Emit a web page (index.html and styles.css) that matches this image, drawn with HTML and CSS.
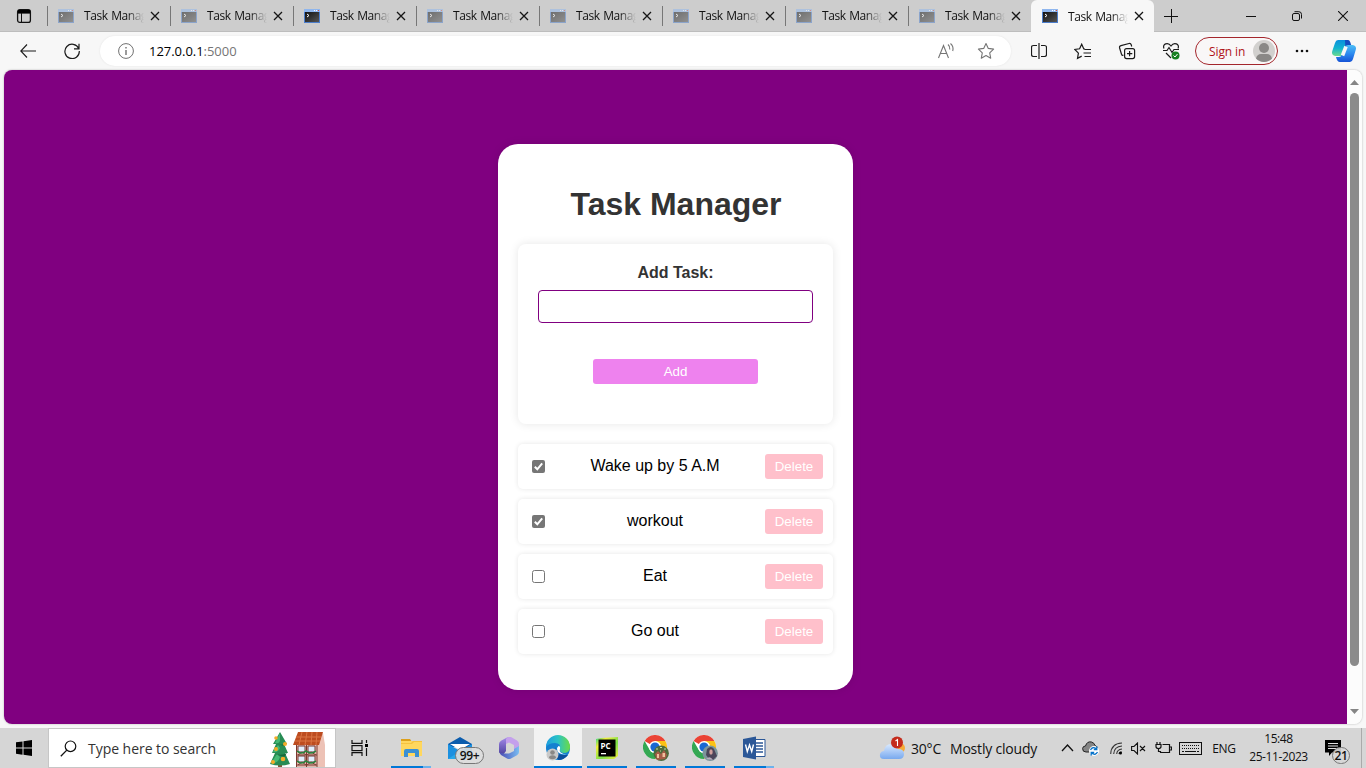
FILE: index.html
```html
<!DOCTYPE html>
<html lang="en">
<head>
<meta charset="utf-8">
<title>Task Manager</title>
<link rel="stylesheet" href="styles.css">
</head>
<body>
<svg class="defs" width="0" height="0" aria-hidden="true">
  <defs>
    <linearGradient id="termBlack" x1="0" y1="0" x2="1" y2="1"><stop offset="0" stop-color="#111"/><stop offset="1" stop-color="#555"/></linearGradient>
    <linearGradient id="cpLeft" x1="0" y1="0" x2="0" y2="1"><stop offset="0" stop-color="#0b8fdd"/><stop offset=".5" stop-color="#12b3cf"/><stop offset="1" stop-color="#6fdc8c"/></linearGradient>
    <linearGradient id="cpRight" x1="0" y1="0" x2="0" y2="1"><stop offset="0" stop-color="#4fc0f5"/><stop offset=".5" stop-color="#2d8cf0"/><stop offset="1" stop-color="#1553d6"/></linearGradient>
    <linearGradient id="cloudFill" x1="0" y1="0" x2="0" y2="1"><stop offset="0" stop-color="#d9e9ff"/><stop offset="1" stop-color="#78a9ee"/></linearGradient>
    <linearGradient id="edgeGreen" x1="0" y1="0" x2="1" y2="0"><stop offset="0" stop-color="#1d9ce0"/><stop offset=".5" stop-color="#2cc3c4"/><stop offset="1" stop-color="#6bdb45"/></linearGradient>
    <linearGradient id="pcEdge" x1="0" y1="0" x2="1" y2="1"><stop offset="0" stop-color="#21d789"/><stop offset=".25" stop-color="#f3f03c"/><stop offset=".6" stop-color="#7be04a"/><stop offset="1" stop-color="#f7ee3a"/></linearGradient>
    <linearGradient id="m365a" x1="0" y1="0" x2="0" y2="1"><stop offset="0" stop-color="#a58bea"/><stop offset="1" stop-color="#4a3f9c"/></linearGradient>
    <linearGradient id="m365b" x1="0" y1="0" x2="1" y2="0"><stop offset="0" stop-color="#4a4bb4"/><stop offset="1" stop-color="#79bdf2"/></linearGradient>
    <symbol id="terminal" viewBox="0 0 16 14">
      <path fill="#4b7dcb" d="M0 0h16v14H0z"/><path fill="#8fb6ee" d="M0 0h16v3H0z"/>
      <path fill="#fff" d="M10 1h1v1h-1zM12 1h1v1h-1z"/><path fill="#e24a35" d="M14 1h1v1h-1z"/>
      <path fill="url(#termBlack)" d="M1 3h14v10H1z"/><path d="M3 5l2 1.5L3 8" fill="none" stroke="#fff"/>
    </symbol>
    <symbol id="close" viewBox="0 0 10 10"><path d="M1 1l8 8M9 1L1 9" fill="none" stroke="#151515" stroke-width="1.3"/></symbol>
    <symbol id="chrome" viewBox="0 0 26 26">
      <circle cx="12" cy="12" r="12" fill="#fff"/>
      <path fill="#ea4335" d="M12 12L1.6 6A12 12 0 0 1 22.4 6H12z"/>
      <path fill="#34a853" d="M12 24A12 12 0 0 1 1.6 6l5.2 9A6 6 0 0 0 12 18l5.2-3z"/>
      <path fill="#fbc116" d="M12 24l5.2-9A6 6 0 0 0 17.2 9L12 6h10.4A12 12 0 0 1 12 24z"/>
      <circle cx="12" cy="12" r="6" fill="#fff"/><circle cx="12" cy="12" r="4.6" fill="#1967d2"/>
    </symbol>
  </defs>
</svg>

<div class="tabstrip">
  <div class="tab-actions"><svg width="16" height="16" viewBox="0 0 16 16"><rect x="1.6" y="1.6" width="12.8" height="12.8" rx="2.2" fill="none" stroke="#111" stroke-width="1.3"/><path d="M2 2h12v3.6H2z"/><path d="M5.5 5v9" stroke="#111"/></svg></div>
  <div class="tab faded"><svg class="fav"><use href="#terminal"/></svg><span>Task Manager</span><svg class="x"><use href="#close"/></svg></div>
  <div class="tab faded"><svg class="fav"><use href="#terminal"/></svg><span>Task Manager</span><svg class="x"><use href="#close"/></svg></div>
  <div class="tab"><svg class="fav"><use href="#terminal"/></svg><span>Task Manager</span><svg class="x"><use href="#close"/></svg></div>
  <div class="tab faded"><svg class="fav"><use href="#terminal"/></svg><span>Task Manager</span><svg class="x"><use href="#close"/></svg></div>
  <div class="tab faded"><svg class="fav"><use href="#terminal"/></svg><span>Task Manager</span><svg class="x"><use href="#close"/></svg></div>
  <div class="tab faded"><svg class="fav"><use href="#terminal"/></svg><span>Task Manager</span><svg class="x"><use href="#close"/></svg></div>
  <div class="tab faded"><svg class="fav"><use href="#terminal"/></svg><span>Task Manager</span><svg class="x"><use href="#close"/></svg></div>
  <div class="tab faded"><svg class="fav"><use href="#terminal"/></svg><span>Task Manager</span><svg class="x"><use href="#close"/></svg></div>
  <div class="tab active"><svg class="fav"><use href="#terminal"/></svg><span>Task Manager</span><svg class="x"><use href="#close"/></svg></div>
  <div class="new-tab"><svg width="14" height="14" viewBox="0 0 14 14"><path d="M7.5 0v14M0 7.5h14" stroke="#111"/></svg></div>
  <div class="window-controls">
    <div><svg width="10" height="10"><path d="M0 5.5h10" stroke="#111"/></svg></div>
    <div><svg width="10" height="10" viewBox="0 0 10 10"><g fill="none" stroke="#111"><rect x=".5" y="2.5" width="7" height="7" rx="1.5"/><path d="M2.5.7h4.3A2.7 2.7 0 0 1 9.5 3.4v4.1"/></g></svg></div>
    <div><svg width="10" height="10" viewBox="0 0 10 10"><path d="M0 0l10 10M10 0L0 10" stroke="#111" stroke-width="1.1"/></svg></div>
  </div>
</div>

<div class="toolbar">
  <div class="tool"><svg width="16" height="14" viewBox="0 0 16 14"><path d="M7 .5L.8 7 7 13.5M1 7h15" fill="none" stroke="#1b1b1b" stroke-width="1.1"/></svg></div>
  <div class="tool"><svg width="16" height="16" viewBox="0 0 16 16"><path d="M14.7 5.5A7.2 7.2 0 1 0 15.3 8M15 .8v5h-5" fill="none" stroke="#1b1b1b" stroke-width="1.2"/></svg></div>
  <div class="address">
    <svg width="16" height="16" viewBox="0 0 16 16"><circle cx="8" cy="8" r="7.4" fill="none" stroke="#707070"/><path d="M8 7v5M8 4v1.5" stroke="#707070" stroke-width="1.4"/></svg>
    <span class="url">127.0.0.1<i>:5000</i></span>
    <svg class="aloud" width="18" height="16" viewBox="0 0 18 16"><path d="M1.500 15L6.500 2.500l5 12.500M3.200 10.500h6.600M11 1.500q2.300 2 1.800 5M13.500.5q3.500 3 2.200 7.500" fill="none" stroke="#757575" stroke-width="1.100"/></svg>
    <svg width="18" height="18" viewBox="0 0 18 18"><path d="M9 1.500l2.300 4.900 5.300.7-3.900 3.700 1 5.400L9 13.600l-4.700 2.600 1-5.400L1.400 7.100l5.300-.7z" fill="none" stroke="#757575" stroke-width="1.100" stroke-linejoin="round"/></svg>
  </div>
  <div class="tool after"><svg width="16" height="16" viewBox="0 0 16 16"><path d="M6 2.500H2.500Q.5 2.500.5 4.500v7q0 2 2 2H6M10 2.500h3.500q2 0 2 2v7q0 2-2 2H10M8 0v16" fill="none" stroke="#1b1b1b" stroke-width="1.200"/></svg></div>
  <div class="tool"><svg width="18" height="17" viewBox="0 0 18 17"><path d="M11 6h-1.200L7.700 1.200 5.600 5.800.8 6.500l3.600 3.600-.9 5.200 4.200-2.200M10.500 6.500H17M9.500 10H17M10.500 13.500H17" fill="none" stroke="#1b1b1b" stroke-width="1.200"/></svg></div>
  <div class="tool"><svg width="18" height="18" viewBox="0 0 18 18"><g fill="none" stroke="#1b1b1b" stroke-width="1.200"><rect x="6.600" y="6.600" width="10" height="10" rx="2"/><path d="M11.600 9v5.300M9 11.600h5.300M13.700 4.500l-.5-1.800a1.800 1.800 0 0 0-2.200-1.200L3 3.600A2 2 0 0 0 1.600 6l1.900 6.200q.5 1.400 1.900 1"/></g></svg></div>
  <div class="tool"><svg width="18" height="18" viewBox="0 0 18 18"><path d="M2 6.500C0 2 6-.5 9 4c3-4.500 9-2 7 2.500M1 8.500h4l2-3 3 5 2-3h5M4 11l5 5" fill="none" stroke="#1b1b1b" stroke-width="1.200"/><circle cx="13.500" cy="13.500" r="4" fill="#168020"/><path d="M11.500 13.500l1.500 1.500 2.500-3" fill="none" stroke="#fff"/></svg></div>
  <div class="signin"><span>Sign in</span><svg width="22" height="22" viewBox="0 0 22 22"><circle cx="11" cy="11" r="11" fill="#d2d0ce"/><circle cx="11" cy="8" r="5" fill="#8a8886"/><path d="M3 18.500Q4 14 8 14h6q4 0 5 4.500A11 11 0 0 1 3 18.500" fill="#8a8886"/></svg></div>
  <div class="tool dots"><svg width="14" height="4"><g fill="#111"><circle cx="2" cy="2" r="1.300"/><circle cx="7" cy="2" r="1.300"/><circle cx="12" cy="2" r="1.300"/></g></svg></div>
  <div class="tool copilot"><svg width="24" height="22" viewBox="0 0 24 22"><path fill="url(#cpLeft)" d="M6 0h9q2.300 0 1.500 2.300L12 15q-1 2-3 1H3q-4-1-2.700-5L3 3q.8-3 3-3z"/><path fill="url(#cpRight)" d="M18 22H8q-3 0-4-5h3q2 0 2.700-2L13 6q1-2 3-1h5q4 1 2.700 5L21 19q-.8 3-3 3z"/><path d="M14 6.500L10.500 15.500" stroke="#f7f7f7" stroke-width="3.600"/><path fill="#164cc1" d="M13 0h3q1.600 0 2.200 2l1 3H16q-2 0-2.700 1.500z"/></svg></div>
</div>

<div class="viewport">
  <main class="page">
    <section class="card">
      <h1>Task Manager</h1>
      <div class="form">
        <label for="task">Add Task:</label>
        <input id="task" type="text">
        <button class="add">Add</button>
      </div>
      <ul class="tasks">
        <li><svg class="check"><rect width="13" height="13" rx="2" fill="#767676"/><path d="M2.800 6.700l2.500 2.600 4.900-6" fill="none" stroke="#fff" stroke-width="2"/></svg><span>Wake up by 5 A.M</span><button>Delete</button></li>
        <li><svg class="check"><rect width="13" height="13" rx="2" fill="#767676"/><path d="M2.800 6.700l2.500 2.600 4.900-6" fill="none" stroke="#fff" stroke-width="2"/></svg><span>workout</span><button>Delete</button></li>
        <li><svg class="check"><rect x=".5" y=".5" width="12" height="12" rx="2" fill="#fff" stroke="#767676"/></svg><span>Eat</span><button>Delete</button></li>
        <li><svg class="check"><rect x=".5" y=".5" width="12" height="12" rx="2" fill="#fff" stroke="#767676"/></svg><span>Go out</span><button>Delete</button></li>
      </ul>
    </section>
  </main>
  <div class="scrollbar">
    <svg width="9" height="5"><path d="M0 5l4.500-5L9 5z" fill="#858585"/></svg>
    <div class="thumb"></div>
    <svg width="9" height="5"><path d="M0 0l4.500 5L9 0z" fill="#858585"/></svg>
  </div>
</div>

<div class="taskbar">
  <div class="start"><svg width="16" height="16" viewBox="0 0 16 16"><path d="M0 2.300L6.500 1.400v6.100H0zM7.500 1.200L16 0v7.500H7.500zM0 8.500h6.500v6.200L0 13.800zM7.500 8.500H16V16l-8.500-1.200z"/></svg></div>
  <div class="search">
    <svg width="17" height="17" viewBox="0 0 17 17"><circle cx="10.500" cy="6.300" r="5.300" fill="none" stroke="#111" stroke-width="1.200"/><path d="M6.800 10.100L.8 16.200" stroke="#111" stroke-width="1.300"/></svg>
    <span>Type here to search</span>
    <svg class="holiday" width="58" height="36" viewBox="0 0 58 36">
      <path fill="#8a5635" d="M9 31h4v5H9z"/><path fill="#278c54" d="M11 1l7 12h-3l4 9h-3l5 11q-10 3-20 0l5-11H3l4-9H4z"/><path fill="#45b875" d="M11 2L6 12q4 1 5-2zM9 14l-5 7q5 1 7-4zM8 23l-6 9q7 1 9-6z"/><path fill="#17683c" d="M8 13q5 2 10-1l-3 3zM6 23q7 2 12-1l-3 4z"/>
      <g fill="#f4ac28"><circle cx="7" cy="7" r="1.800"/><circle cx="16" cy="13" r="2"/><circle cx="7" cy="18" r="2"/><circle cx="14" cy="28" r="2.300"/><circle cx="4" cy="31" r="2"/></g>
      <path fill="#e3b5aa" d="M27 11h26v25H27z"/><path fill="#edc2b6" d="M47 8l7-6 2 12v22h-9z"/><path fill="#bd4c20" d="M29 1h25l-4 13H24z"/><path d="M27 6h25M26 10h25M33 1l-3 13M38 1l-2 13M43 1l-1 13M48 1l-1 13" stroke="#db7443" fill="none"/>
      <g stroke="#7b3a32" fill="#e0efff"><path d="M29 15h7v6h-7zM39 15h7v6h-7zM29 25h7v6h-7zM39 25h7v6h-7z"/><path fill="none" d="M27 24h21M27 34h21M37.500 14v22M27.500 14v22M48 14v22M29 24l4-3 4 3M38 24l4-3 5 3M29 34l4-3 4 3M38 34l4-3 5 3"/></g><path d="M28 20q4.500 4 9 0q5 4 10 0M28 30q4.500 4 9 0q5 4 10 0" fill="none" stroke="#278540" stroke-width="1.600"/>
    </svg>
  </div>
  <div class="app view"><svg width="17" height="16" viewBox="0 0 17 16"><g fill="none" stroke="#111" stroke-width="1.200"><path d="M1 0v3.400h10V0M1 16v-3.400h10V16"/><rect x="1" y="5.600" width="10" height="5"/><path d="M15.500 0v3M15.500 8v8"/></g><path d="M14 4h3v3h-3z"/></svg></div>
  <div class="app run more"><svg width="22" height="20" viewBox="0 0 22 20"><path fill="#dda01b" d="M1 1h9l2 3H1z"/><path fill="#ffd75e" d="M1 3h21v15H1z"/><path fill="#f6c23e" d="M1 5h10l2-2h9v1h-8l-2 2H1z"/><path fill="#3b90d4" d="M4 19v-6q0-2 2-2h11q2 0 2 2v6h-4v-4H8v4z"/></svg></div>
  <div class="app mail"><svg width="26" height="24" viewBox="0 0 26 24"><path fill="#0b5cad" d="M1 8l12-7 12 7v3H1z"/><path fill="#1b90e0" d="M1 8v15h24V8L13 15z"/><path fill="#fff" d="M3 8h20l-10 6z"/><path fill="#28a8ea" d="M1 23L16 13l9 10z"/></svg><b>99+</b></div>
  <div class="app"><svg width="22" height="24" viewBox="0 0 22 24"><path fill="url(#m365a)" d="M12 1L8 3.500V15l-3 4-4-2.500V8q0-2 2-3.200L8.500 1.700Q10 1 12 1z"/><path fill="#c4a0ec" d="M10 1h3l6 3.500q2 1.200 2 3.500v8l-5-3V9l-5-2.500L8 8V3.500Q8 2 10 1z"/><path fill="url(#m365b)" d="M16 13l5-3v6q0 2-2 3.200l-6 3.400q-2 1-4 0L3 19l-1.500-2.200 4.500.7L11 17.500l5-2.500z"/></svg></div>
  <div class="app current"><svg width="28" height="26" viewBox="0 0 28 26"><circle cx="14" cy="13" r="12" fill="#1480d0"/><path fill="url(#edgeGreen)" d="M2 12A12 12 0 0 1 26 12q0 5-5 6-6 0-5-4 1-6-5-6-6 0-9 4z"/><path fill="#fff" d="M13 13q-.5 6 8 6.500l2.500-.5q-3 1-6-1-2.500-1.500-1.500-4 .5-3-1.500-3z"/><path fill="#0b4f9c" d="M12 12q-2 9 12 8-4 5-9.500 5-6.500-5-2.500-13z"/><circle cx="8.500" cy="19.500" r="6" fill="#c9c9c9"/><circle cx="8.500" cy="17.500" r="2.300" fill="#8a8886"/><path fill="#8a8886" d="M5 23q0-2.800 3.500-2.800T12 23q-3.500 2.500-7 0z"/></svg></div>
  <div class="app run"><svg width="22" height="22" viewBox="0 0 22 22"><path fill="url(#pcEdge)" d="M0 2L5 1l17-1v19l-4 3H0z"/><path d="M2.500 2.500h17v17h-17z"/><path d="M5 16h5v1.300H5z" fill="#fff"/><text x="4.500" y="11.500" class="pc">PC</text></svg></div>
  <div class="app run"><svg width="26" height="26" viewBox="0 0 26 26"><use href="#chrome" width="26" height="26"/><circle cx="18.200" cy="18.200" r="7.700" fill="#4d6b3c"/><path d="M12 19l3-3 3 3 3-4 3 5-2 4-8 1z" fill="#a65d48"/><path d="M14 19h2v4h-2zM19.500 18h2.500v4h-2.500z" fill="#efc09d"/><path d="M13 14h2M17 12.500h2M21 14h2M17 16h1" stroke="#c3e2a4"/></svg></div>
  <div class="app run"><svg width="26" height="26" viewBox="0 0 26 26"><use href="#chrome" width="26" height="26"/><circle cx="18.200" cy="18.200" r="7.700" fill="#7c959b"/><path d="M15 14q4-4 7 0l3 7-4 4-4-1-3-4z" fill="#4b465a"/><ellipse cx="19" cy="17" rx="1.700" ry="2.800" fill="#d0a09c"/><path d="M14 24q4-4 7 1z" fill="#b6adbd"/></svg></div>
  <div class="app run more"><svg width="24" height="24" viewBox="0 0 24 24"><path fill="#fff" stroke="#2b5797" d="M11 3.500h12v17H11z"/><path d="M14 7h7M14 10h7M14 13h7M14 16h7" stroke="#2b5797" stroke-width="1.300"/><path fill="#2b5797" d="M1 3l13-2.500v23L1 21z"/><path d="M3.500 8.500l1.800 7L7.500 9l2.200 6.500 1.800-7" fill="none" stroke="#fff" stroke-width="1.400"/></svg></div>

  <div class="weather"><svg width="27" height="24" viewBox="0 0 27 24"><circle cx="21" cy="12" r="5" fill="#f6aa37"/><path fill="url(#cloudFill)" d="M5 23q-5 0-4-5 1-3 4-3 1-7 7-7 5 0 7 5 6 0 6 5 0 5-5 5z"/><circle cx="18" cy="6.500" r="6" fill="#c42b1c"/><path d="M16.500 5l2-1.500V10" fill="none" stroke="#fff" stroke-width="1.100"/></svg><span class="temp">30°C</span><span class="sky">Mostly cloudy</span></div>
  <div class="tray">
    <div class="t-up"><svg width="13" height="8"><path d="M1 7l5.500-6L12 7" fill="none" stroke="#111" stroke-width="1.300"/></svg></div>
    <div class="t-cloud"><svg width="17" height="15" viewBox="0 0 17 15"><path fill="#858585" stroke="#222" d="M4 11Q.5 11 .6 7.500.8 5 3.500 5 5 0 9.500 1q3 1 3.500 3.500Q16 5 15.500 9L12 11z"/><circle cx="12" cy="10" r="5" fill="#fff"/><path d="M8.500 9q2-4 6-1M15.500 11q-2 4-6 1M14.800 5.500V8.500h-3M9.200 14.500v-3h3" fill="none" stroke="#0873c9" stroke-width="1.300"/></svg></div>
    <div class="t-wifi"><svg width="13" height="13" viewBox="0 0 13 13"><path d="M.7 12Q1 1.500 12 1M3.700 12Q4 4.500 12 4M6.700 12Q7 7.500 12 7M9 12q0-2 3-2" fill="none" stroke="#333" stroke-width="1.100"/><circle cx="10.500" cy="11" r="1.500"/></svg></div>
    <div class="t-snd"><svg width="15" height="13" viewBox="0 0 15 13"><path d="M.6 4.500H3L6.500 1v11L3 8.500H.6zM9 4l5 5M14 4L9 9" fill="none" stroke="#111" stroke-width="1.100"/></svg></div>
    <div class="t-bat"><svg width="17" height="12" viewBox="0 0 17 12"><path d="M7.500 2.500h7v8h-9V9M15 5h1.500v3H15M1 2.500h5v2q0 2-2.500 2T1 4.500zM2 0v2M5 0v2M3.500 7v2.500h2" fill="none" stroke="#111" stroke-width="1.200"/></svg></div>
    <div class="t-kbd"><svg width="23" height="13" viewBox="0 0 23 13"><rect x=".5" y=".5" width="22" height="12" fill="none" stroke="#111"/><path d="M3 3.500h17M3 6.500h17" stroke="#111" stroke-dasharray="1 1"/><path d="M3 9.500h2M6 9.500h11M18 9.500h2" stroke="#111"/></svg></div>
    <div class="lang">ENG</div>
    <div class="clock"><span>15:48</span><span class="date">25-11-2023</span></div>
    <div class="notes"><svg width="16" height="16" viewBox="0 0 16 16"><path d="M0 0h16v12.500H7L4 16v-3.500H0z"/><path d="M3 3.500h10M3 6h10M3 8.500h10" stroke="#ddd"/></svg><b>21</b></div>
    <div class="desk"></div>
  </div>
</div>
</body>
</html>
```
FILE: styles.css
```css
* { box-sizing: border-box; }
body { margin: 0; width: 1366px; height: 768px; overflow: hidden; display: flex; flex-direction: column; background: #f7f7f7; color: #111; font-family: "Open Sans", "Noto Sans", sans-serif; }
svg { display: block; flex: none; }
.defs { position: absolute; }

.tabstrip { height: 32px; flex: none; display: flex; align-items: center; background: #cdcdcd; border-bottom: 1px solid #bdbdbd; }
.tab-actions { width: 47px; display: flex; justify-content: center; }
.tab { width: 123px; height: 100%; display: flex; align-items: center; padding-left: 11px; font-size: 12px; letter-spacing: -.45px; word-spacing: 1px; position: relative; }
.tab::before { content: ""; position: absolute; left: 0; top: 6px; width: 1px; height: 20px; background: #777; }
.fav { width: 16px; height: 14px; }
.faded .fav { opacity: .5; }
.tab span { width: 60px; margin: 0 6px 0 10px; overflow: hidden; white-space: nowrap; -webkit-mask-image: linear-gradient(90deg, #000 43px, transparent 60px); mask-image: linear-gradient(90deg, #000 43px, transparent 60px); }
.x { width: 10px; height: 10px; }
.tab.active { height: 32px; align-self: flex-start; background: #f7f7f7; border-radius: 6px 6px 0 0; }
.tab.active::before { display: none; }
.new-tab { width: 34px; display: flex; justify-content: center; }
.window-controls { margin-left: auto; display: flex; }
.window-controls div { width: 46px; display: flex; justify-content: center; }

.toolbar { height: 38px; flex: none; display: flex; align-items: center; padding-left: 6px; }
.tool { width: 44px; display: flex; justify-content: center; }
.address { width: 911px; height: 30px; margin-left: 6px; padding: 0 16px 0 18px; display: flex; align-items: center; border-radius: 15px; background: #fff; box-shadow: 0 0 2px #e2e2e2; }
.url { margin-left: 15px; font-size: 13px; letter-spacing: -.03px; color: #000; }
.url i { font-style: normal; color: #757575; }
.aloud { margin: 0 22px 0 auto; }
.after { margin-left: 6px; }
.signin { width: 83px; height: 28px; margin-left: 2px; padding: 0 2px 0 13px; display: flex; align-items: center; justify-content: space-between; border: 1px solid #a4262c; border-radius: 14px; background: #f9f7f7; color: #b01318; font-size: 12px; letter-spacing: -.1px; white-space: nowrap; }
.dots { margin-left: 2px; }
.copilot { margin-left: -2px; }

.viewport { height: 654px; margin: 0 4px 4px; flex: none; display: flex; overflow: hidden; border-radius: 8px; background: #fcfcfc; box-shadow: 0 0 2px #aaa; }
.page { width: 1343px; padding-top: 74px; background: #800080; color: #000; font-family: Arial, "Liberation Sans", sans-serif; font-size: 16px; }
.card { width: 355px; height: 546px; margin: 0 auto; padding: 20px; border-radius: 20px; background: #fff; box-shadow: 0 0 10px rgba(0,0,0,.1); text-align: center; }
.card h1 { margin: 21px 0 21px; padding-left: 1px; font-size: 32px; line-height: 38px; color: #333; }
.form { height: 180px; padding: 20px; display: flex; flex-direction: column; align-items: center; border-radius: 8px; box-shadow: 0 0 10px rgba(0,0,0,.1); }
.form label { font-weight: bold; line-height: 18px; color: #333; }
.form input { width: 275px; height: 33px; margin: 8px 0 36px; border: 1px solid #800080; border-radius: 4px; background: #fff; }
.card button { height: 25px; padding: 0; border: 0; border-radius: 3px; color: #fff; font: 13.333px Arial, "Liberation Sans", sans-serif; }
.card .add { width: 165px; background: #ee82ee; }
.tasks { margin: 20px 0 0; padding: 0; list-style: none; display: grid; gap: 10px; }
.tasks li { height: 45px; padding: 0 10px 0 14px; display: flex; align-items: center; border-radius: 5px; box-shadow: 0 0 5px rgba(0,0,0,.1); }
.check { width: 13px; height: 13px; }
.tasks span { flex: 1; line-height: 18px; padding-bottom: 2px; }
.tasks button { width: 58px; background: #ffc0cb; }
.scrollbar { width: 15px; padding: 10px 0; display: flex; flex-direction: column; align-items: center; background: #fcfcfc; }
.thumb { width: 9px; height: 573px; margin: 8px 0 43px; border-radius: 5px; background: #8b8b8b; }

.taskbar { height: 40px; flex: none; display: flex; background: #d6d6d6; }
.start { width: 48px; display: flex; align-items: center; justify-content: center; }
.search { width: 288px; height: 40px; display: flex; align-items: center; padding-left: 11px; border: 1px solid #c6c6c6; background: #fff; }
.search span { width: 129px; margin-left: 11px; font-size: 14px; letter-spacing: -.04px; color: #333; white-space: nowrap; }
.holiday { margin: 2px 0 0 52px; }
.app { position: relative; width: 49px; display: flex; align-items: center; justify-content: center; }
.app.view { width: 50px; padding-right: 3px; }
.run::after { content: ""; position: absolute; left: 5px; bottom: 0; width: 40px; height: 2px; background: #0078d7; }
.more::after { background: linear-gradient(90deg, #0078d7 32px, #6cb2ec 32px); }
.current { background: #f2f2f2; margin-left: 1px; width: 48px; }
.current::after { content: ""; position: absolute; left: 0; right: 0; bottom: 0; height: 2px; background: #0078d7; }
.mail b { position: absolute; left: 20px; top: 19px; width: 29px; height: 17px; border: 1px solid #777; border-radius: 9px; background: rgba(222,222,222,.9); font-size: 12px; font-weight: 600; line-height: 15px; letter-spacing: -.3px; text-align: center; }
.pc { font: bold 8px "Open Sans", sans-serif; fill: #fff; }
.weather { margin-left: 101px; display: flex; align-items: center; font-size: 14px; letter-spacing: -.2px; white-space: nowrap; }
.temp { width: 30px; margin: 0 9px 0 5px; }
.sky { width: 87px; }
.tray { margin-left: auto; display: flex; align-items: center; }
.tray > div { display: flex; justify-content: center; }
.t-up { width: 18px; }
.t-cloud { width: 29px; }
.t-wifi { width: 23px; }
.t-snd { width: 21px; }
.t-bat { width: 28px; }
.t-kbd { width: 27px; }
.lang { width: 40px; font-size: 12px; letter-spacing: -.3px; }
.tray .clock { width: 69px; flex-direction: column; align-items: center; font-size: 12px; line-height: 18px; letter-spacing: -.4px; }
.tray .notes { width: 48px; position: relative; padding-right: 8px; }
.notes b { position: absolute; left: 19px; top: 7px; width: 18px; height: 17px; border: 1px solid #777; border-radius: 9px; background: rgba(215,215,215,.9); font-size: 12px; font-weight: 600; line-height: 15px; letter-spacing: -.4px; text-align: center; }
.tray .desk { width: 5px; height: 40px; border-left: 1px solid #aaa; }
```
